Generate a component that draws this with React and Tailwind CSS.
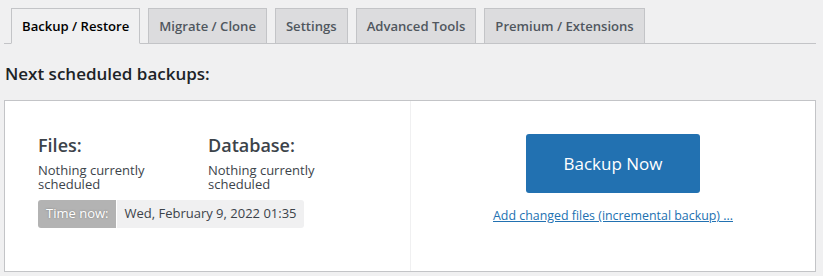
export default function App() {
  const tabs = ['Backup / Restore', 'Migrate / Clone', 'Settings', 'Advanced Tools', 'Premium / Extensions'];
  return (
    <div className="w-[823px] h-[276px] bg-[#f0f0f1] text-[#3c434a] overflow-hidden" style={{ fontFamily: '"Open Sans", "Noto Sans", sans-serif' }}>
      <div className="ml-[4px] w-[812px] pt-[8px]">
        <div className="flex gap-[8px] pl-[7px] border-b border-[#c3c4c7]">
          {tabs.map((t, i) => (
            <div
              key={t}
              className={
                i === 0
                  ? 'px-[10px] py-[5px] border border-[#c3c4c7] border-b-[#f0f0f1] -mb-px bg-[#f0f0f1] text-black text-[13.1px] font-semibold leading-[24px]'
                  : 'px-[10px] py-[5px] border border-b-0 border-[#c3c4c7] bg-[#dcdcde] text-[#50575e] text-[13.1px] font-semibold leading-[24px]'
              }
            >
              {t}
            </div>
          ))}
        </div>
        <h2 className="mt-[18px] ml-[1px] text-[17px] font-semibold text-[#1d2327] leading-[24px]">Next scheduled backups:</h2>
        <div className="mt-[14px] flex h-[172px] bg-white border border-[#c3c4c7]">
          <div className="w-[406px] border-r border-[#f0f0f1] pl-[33px] pt-[32px]">
            <div className="flex">
              <div className="w-[170px]">
                <div className="text-[18px] font-semibold text-[#3c434a] leading-[24px]">Files:</div>
                <div className="mt-[6px] text-[13px] leading-[14px] text-[#3c434a]">
                  <div>Nothing currently</div>
                  <div>scheduled</div>
                </div>
              </div>
              <div>
                <div className="text-[18px] font-semibold text-[#3c434a] leading-[24px]">Database:</div>
                <div className="mt-[6px] text-[13px] leading-[14px] text-[#3c434a]">
                  <div>Nothing currently</div>
                  <div>scheduled</div>
                </div>
              </div>
            </div>
            <div className="mt-[9px] inline-flex h-[28px] rounded-[3px] overflow-hidden text-[13px]">
              <span className="flex items-center px-[8px] bg-[#b3b3b3] text-white border-r border-white" style={{ textShadow: '0 0 2px #777' }}>Time now:</span>
              <span className="flex items-center px-[7px] bg-[#f0f0f1] text-[#3c434a]">Wed, February 9, 2022 01:35</span>
            </div>
          </div>
          <div className="flex-1 flex flex-col items-center pt-[33px]">
            <button className="w-[174px] h-[59px] bg-[#2271b1] text-white text-[17px] rounded-[3px]">Backup Now</button>
            <a className="mt-[14px] text-[12.4px] text-[#2271b1] underline">Add changed files (incremental backup) ...</a>
          </div>
        </div>
      </div>
    </div>
  );
}
